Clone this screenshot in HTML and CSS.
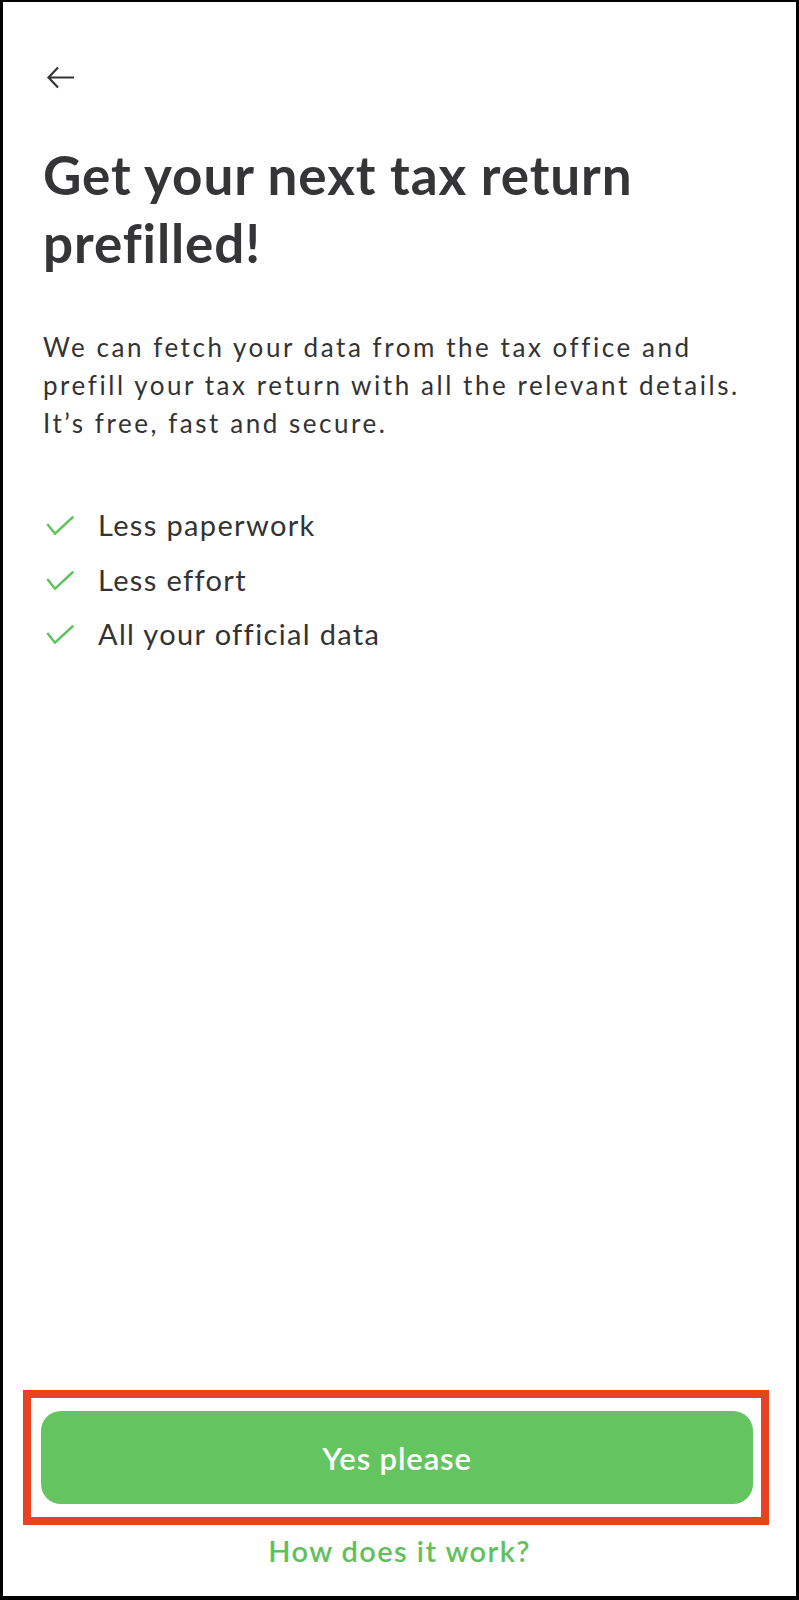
FILE: index.html
```html
<!DOCTYPE html>
<html lang="en">

<head>
    <meta charset="UTF-8">
    <meta name="viewport" content="width=device-width, initial-scale=1.0">
    <title>Prefill your tax return</title>

    <link rel="stylesheet" href="styles.css">
</head>

<body>
    <div class="screen">
        <div class="content">
            <a class="back-btn" href="javascript:void(0)">
                <svg width="28" height="23" viewBox="0 0 28 23">
                    <path d="M1.5 11.5H27M11 1.5L1.5 11.5L11 21.5" fill="none" stroke="#333" stroke-width="2.2" />
                </svg>
            </a>

            <h1 class="title">Get your next tax return prefilled!</h1>

            <p class="intro">We can fetch your data from the tax office and prefill your tax return with all the relevant details. It’s free, fast and secure.</p>

            <ul class="benefits">
                <li>
                    <svg class="check" width="28" height="20" viewBox="0 0 28 20">
                        <path d="M1.3 9L9 18.7L27.3 1.7" fill="none" stroke="#5fc35c" stroke-width="2.4" />
                    </svg>
                    Less paperwork
                </li>
                <li>
                    <svg class="check" width="28" height="20" viewBox="0 0 28 20">
                        <path d="M1.3 9L9 18.7L27.3 1.7" fill="none" stroke="#5fc35c" stroke-width="2.4" />
                    </svg>
                    Less effort
                </li>
                <li>
                    <svg class="check" width="28" height="20" viewBox="0 0 28 20">
                        <path d="M1.3 9L9 18.7L27.3 1.7" fill="none" stroke="#5fc35c" stroke-width="2.4" />
                    </svg>
                    All your official data
                </li>
            </ul>
        </div>

        <div class="footer">
            <div class="highlight">
                <a class="primary-btn" href="javascript:void(0)">Yes please</a>
            </div>
            <a class="link-btn" href="javascript:void(0)">How does it work?</a>
        </div>
    </div>
</body>

</html>
```

FILE: styles.css
```css
html {
    height: 100%;
}

body {
    margin: 0;
    padding: 0;
    font-family: Lato, "Liberation Sans", sans-serif;
    background: #fff;
    color: #353437;
}

.screen {
    display: flex;
    flex-direction: column;
    height: 1600px;
    box-sizing: border-box;
    border-style: solid;
    border-color: #000;
    border-width: 2px 3px 4px 3px;
}

.content {
    padding: 0 30px 0 40px;
}

.back-btn {
    display: block;
    width: 28px;
    height: 23px;
    margin: 64px 0 0 4px;
}

.back-btn svg {
    display: block;
}

.title {
    margin: 52px 0 0;
    font-size: 53px;
    line-height: 68px;
    font-weight: 700;
    letter-spacing: 0.9px;
    color: #353437;
}

.intro {
    margin: 51px 0 0;
    font-size: 26px;
    line-height: 38px;
    letter-spacing: 2.55px;
    color: #333;
}

.benefits {
    list-style: none;
    margin: 56px 0 0;
    padding: 0;
}

.benefits li {
    display: flex;
    align-items: center;
    font-size: 29px;
    line-height: 54.5px;
    letter-spacing: 1.35px;
    color: #333;
}

.benefits .check {
    flex: none;
    margin: 0 24px 0 3px;
}

.footer {
    margin-top: auto;
    display: flex;
    flex-direction: column;
    align-items: center;
    padding-bottom: 25px;
}

.highlight {
    align-self: stretch;
    margin: 0 27px 0 20px;
    padding: 13px 8px 13px 10px;
    border: 8px solid #ea4122;
}

.primary-btn {
    display: flex;
    align-items: center;
    justify-content: center;
    height: 93px;
    border-radius: 20px;
    background: #64c45f;
    color: #fff;
    font-size: 31px;
    font-weight: 600;
    letter-spacing: 0.85px;
    text-decoration: none;
}

.link-btn {
    margin-top: 6px;
    font-size: 29px;
    line-height: 40px;
    font-weight: 600;
    letter-spacing: 1.4px;
    color: #5fc15b;
    text-decoration: none;
}
```
